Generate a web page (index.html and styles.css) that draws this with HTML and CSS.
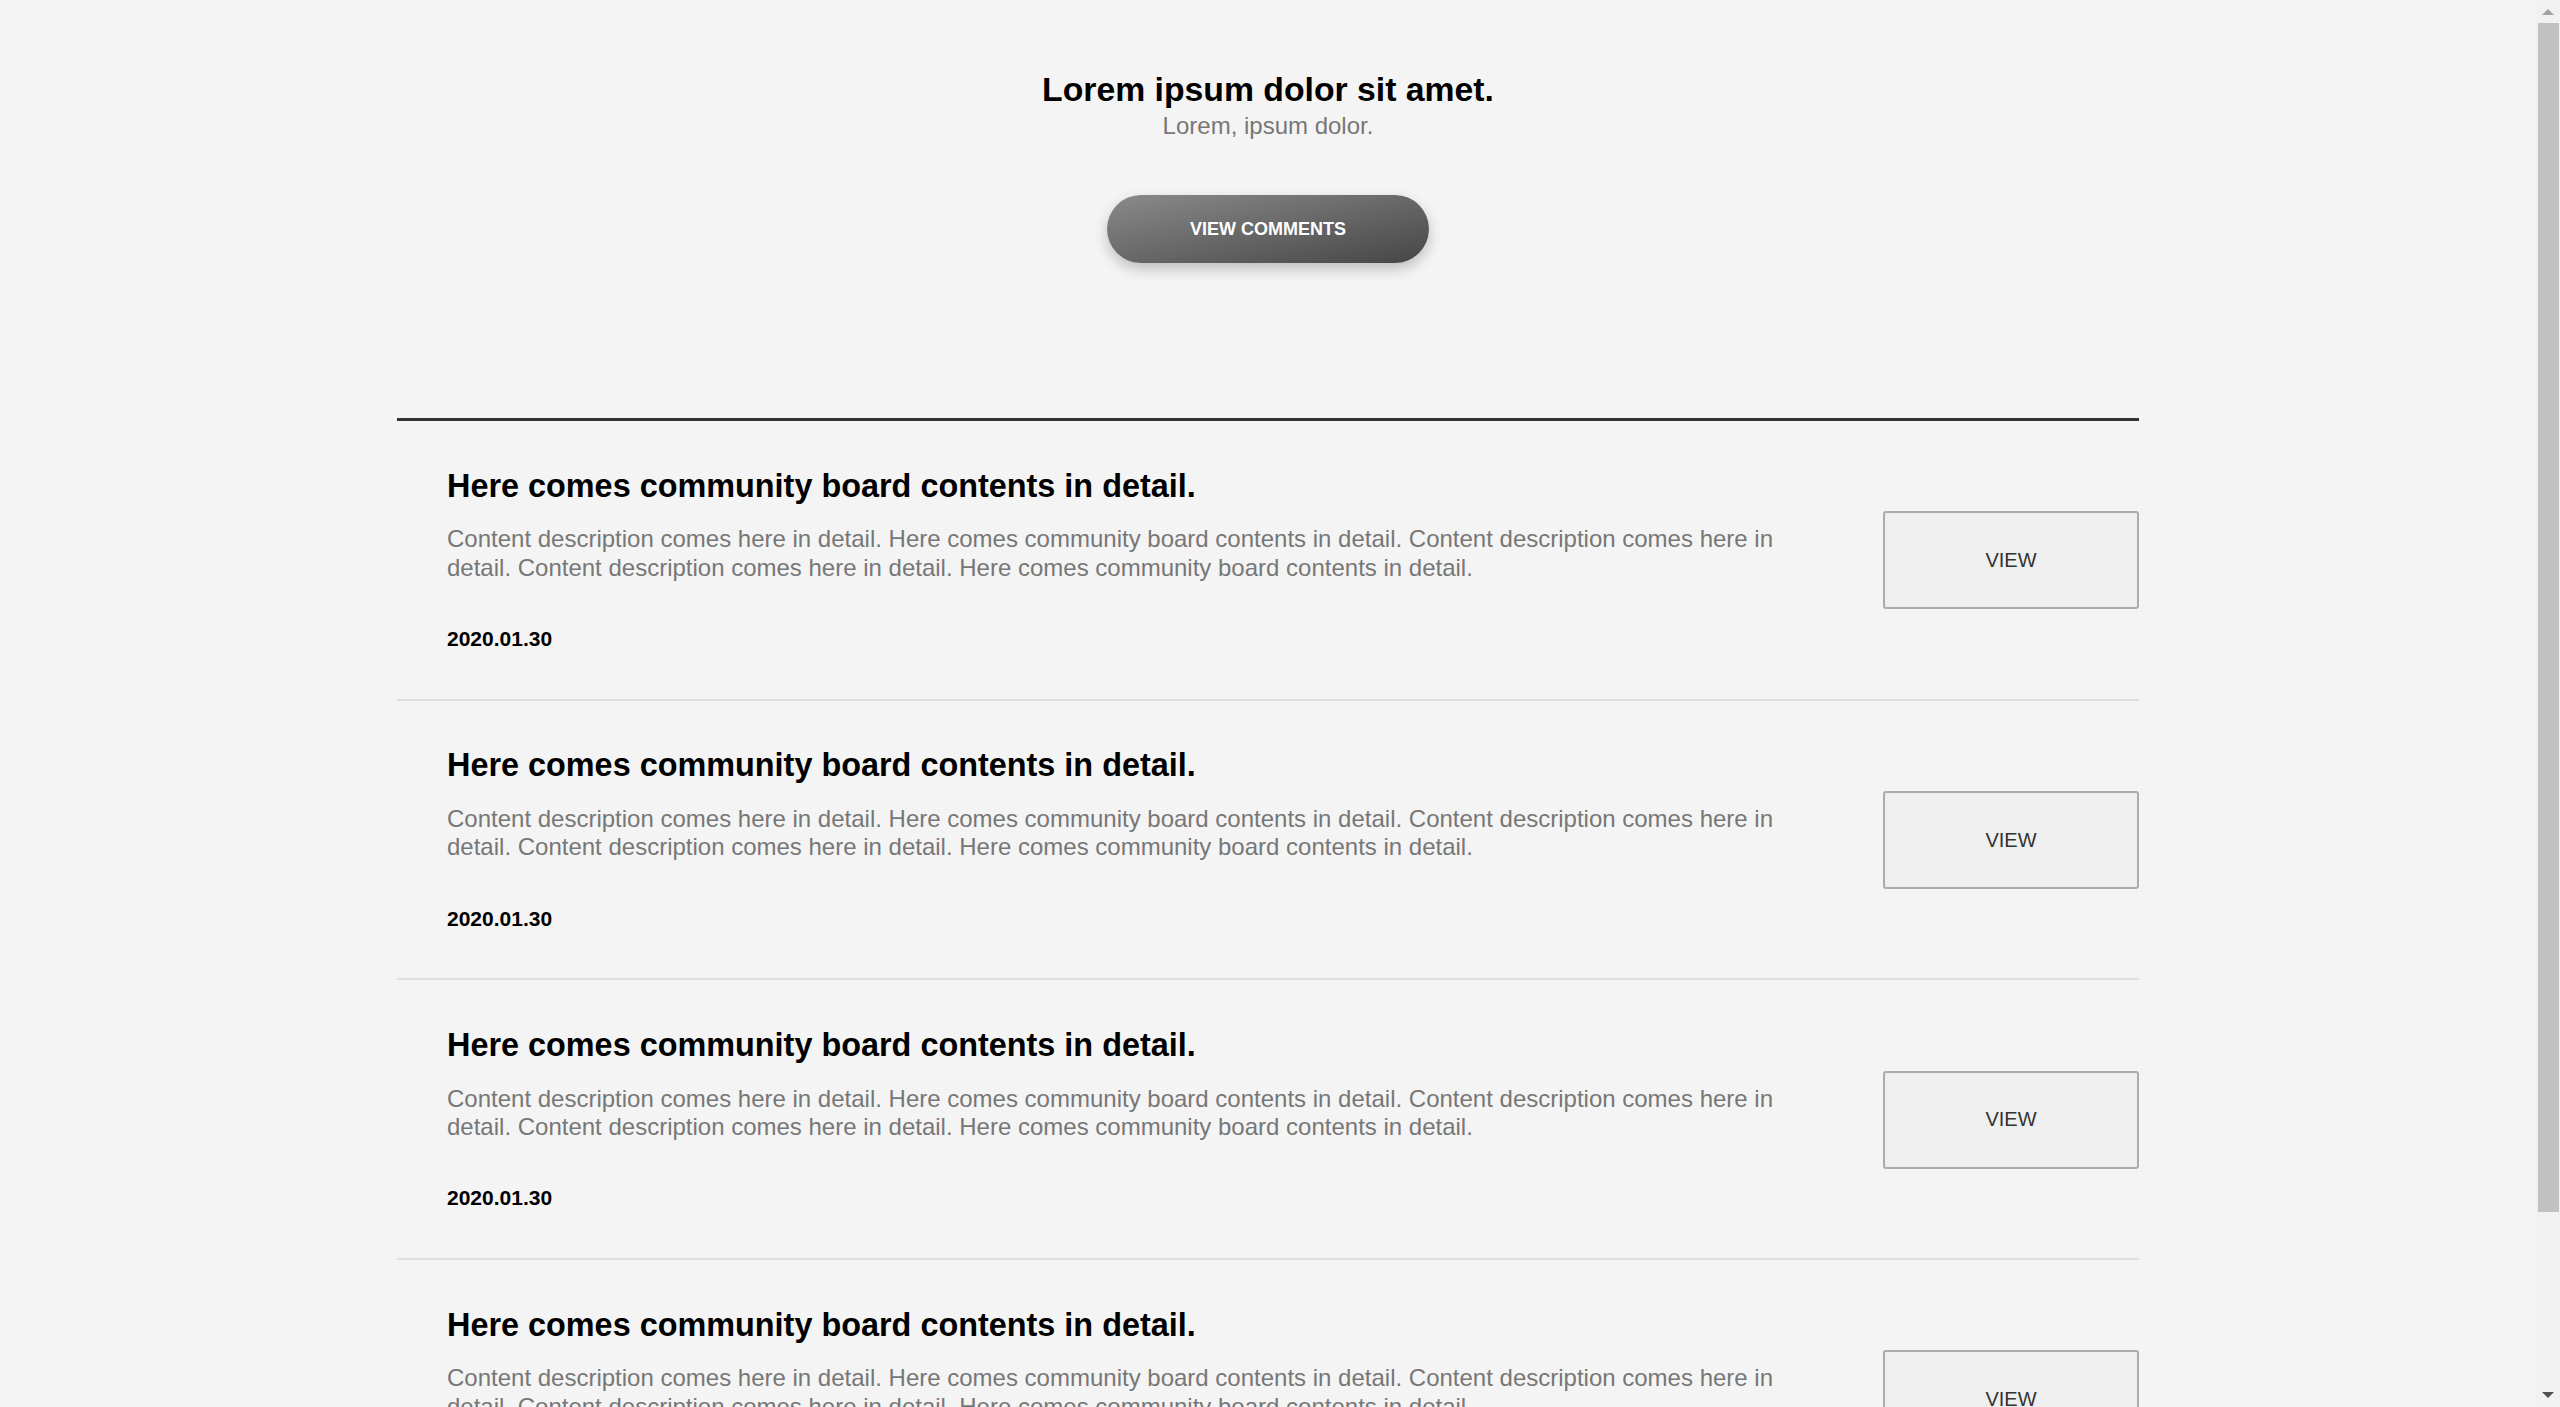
FILE: index.html
```html
<!DOCTYPE html>
<html lang="en">
<head>
<meta charset="utf-8">
<title>Community Board</title>
<link rel="stylesheet" href="styles.css">
</head>
<body>
<main class="page">
  <header class="intro">
    <h1 class="intro-title">Lorem ipsum dolor sit amet.</h1>
    <p class="intro-sub">Lorem, ipsum dolor.</p>
    <button class="pill-btn" type="button">VIEW COMMENTS</button>
  </header>

  <section class="board">
    <article class="post">
      <div class="post-body">
        <h2 class="post-title">Here comes community board contents in detail.</h2>
        <p class="post-desc">Content description comes here in detail. Here comes community board contents in detail. Content description comes here in detail. Content description comes here in detail. Here comes community board contents in detail.</p>
        <p class="post-date">2020.01.30</p>
      </div>
      <button class="view-btn" type="button">VIEW</button>
    </article>
    <article class="post">
      <div class="post-body">
        <h2 class="post-title">Here comes community board contents in detail.</h2>
        <p class="post-desc">Content description comes here in detail. Here comes community board contents in detail. Content description comes here in detail. Content description comes here in detail. Here comes community board contents in detail.</p>
        <p class="post-date">2020.01.30</p>
      </div>
      <button class="view-btn" type="button">VIEW</button>
    </article>
    <article class="post">
      <div class="post-body">
        <h2 class="post-title">Here comes community board contents in detail.</h2>
        <p class="post-desc">Content description comes here in detail. Here comes community board contents in detail. Content description comes here in detail. Content description comes here in detail. Here comes community board contents in detail.</p>
        <p class="post-date">2020.01.30</p>
      </div>
      <button class="view-btn" type="button">VIEW</button>
    </article>
    <article class="post">
      <div class="post-body">
        <h2 class="post-title">Here comes community board contents in detail.</h2>
        <p class="post-desc">Content description comes here in detail. Here comes community board contents in detail. Content description comes here in detail. Content description comes here in detail. Here comes community board contents in detail.</p>
        <p class="post-date">2020.01.30</p>
      </div>
      <button class="view-btn" type="button">VIEW</button>
    </article>
  </section>
</main>

<div class="scrollbar" aria-hidden="true">
  <span class="sb-btn sb-up"></span>
  <div class="sb-track"><div class="sb-thumb"></div></div>
  <span class="sb-btn sb-down"></span>
</div>
</body>
</html>
```

FILE: styles.css
```css
html {
  background: #f4f4f4;
}

body {
  margin: 0 24px 0 0;
  font-family: "Liberation Sans", Arial, Helvetica, sans-serif;
  color: #000;
}

.page {
  width: 1742px;
  margin: 0 auto;
  padding-bottom: 71px;
}

.intro {
  display: flex;
  flex-direction: column;
  align-items: center;
  padding-top: 69px;
}

.intro-title {
  margin: 0;
  font-size: 33.75px;
  line-height: 41px;
  font-weight: 700;
}

.intro-sub {
  margin: 0;
  font-size: 24px;
  line-height: 29.5px;
  color: #777;
  padding-top: 0.5px;
}

.pill-btn {
  margin-top: 55px;
  width: 322px;
  height: 68px;
  border: none;
  border-radius: 34px;
  background: linear-gradient(to right bottom, #8a8a8a, #464646);
  box-shadow: 0 6px 14px rgba(0, 0, 0, 0.22);
  color: #fff;
  font-family: "Liberation Sans", Arial, sans-serif;
  font-size: 18px;
  font-weight: 700;
  cursor: pointer;
}

.board {
  margin-top: 155px;
  border-top: 3px solid #333;
}

.post {
  display: flex;
  align-items: center;
  gap: 76px;
  padding: 45.5px 0 47.5px 50px;
  border-bottom: 2px solid #dedede;
}

.post-body {
  flex: 1;
  min-width: 0;
}

.post-title {
  margin: 0;
  font-size: 32.4px;
  line-height: 38.88px;
  font-weight: 700;
}

.post-desc {
  margin: 20px 0 0;
  font-size: 24px;
  line-height: 28.3px;
  color: #777;
}

.post-date {
  margin: 44px 0 0;
  font-size: 21px;
  line-height: 25.2px;
  font-weight: 700;
}

.view-btn {
  flex: none;
  width: 256px;
  height: 98px;
  margin-top: 3px;
  border: 2px solid #ababab;
  border-radius: 3px;
  background: #efefef;
  color: #333;
  font-family: "Liberation Sans", Arial, sans-serif;
  font-size: 20px;
  cursor: pointer;
}

/* window scrollbar, drawn over the right edge */
.scrollbar {
  position: fixed;
  top: 0;
  right: 0;
  width: 24px;
  height: 100vh;
  display: flex;
  flex-direction: column;
  background: #f1f1f1;
}

.sb-btn {
  flex: none;
  height: 23px;
  display: flex;
  align-items: center;
  justify-content: center;
}

.sb-up::before,
.sb-down::before {
  content: "";
  width: 0;
  height: 0;
  border-left: 6px solid transparent;
  border-right: 6px solid transparent;
}

.sb-up::before {
  border-bottom: 6px solid #a3a3a3;
}

.sb-down::before {
  border-top: 6px solid #505050;
  margin-top: -1px;
}

.sb-track {
  flex: 1;
  padding: 0 1px 0 2px;
}

.sb-thumb {
  height: 1189px;
  background: #c1c1c1;
}
```
